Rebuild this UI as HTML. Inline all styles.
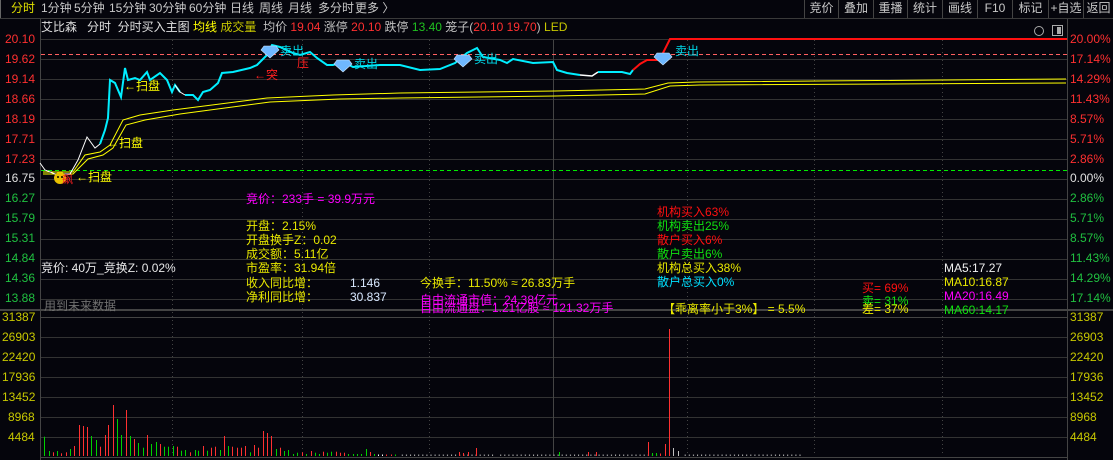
<!DOCTYPE html>
<html><head><meta charset="utf-8">
<style>
*{margin:0;padding:0;box-sizing:border-box}
body{width:1113px;height:460px;background:#05050c;overflow:hidden;position:relative;font-family:"Liberation Sans","Noto Sans CJK SC",sans-serif;font-size:12px;color:#c8c8c8}
.t{position:absolute;white-space:nowrap;line-height:14px}
.tb{position:absolute;top:0;height:18px;line-height:17px;font-size:12px;color:#c8c8c8}
.btn{position:absolute;top:0;height:18px;border-left:1px solid #444;text-align:center;line-height:17px;color:#c8c8c8}
.ax{position:absolute;font-size:12px;line-height:14px;white-space:nowrap}
</style></head><body>
<div style="position:absolute;left:0;top:18px;width:1113px;height:1px;background:#3a3a3a"></div>
<div style="position:absolute;left:0;top:0;width:1px;height:18px;background:#666"></div>
<div class="tb" style="left:11px;color:#e0e000">分时</div>
<div class="tb" style="left:41px">1分钟</div>
<div class="tb" style="left:74px">5分钟</div>
<div class="tb" style="left:109px">15分钟</div>
<div class="tb" style="left:149px">30分钟</div>
<div class="tb" style="left:189px">60分钟</div>
<div class="tb" style="left:230px">日线</div>
<div class="tb" style="left:259px">周线</div>
<div class="tb" style="left:288px">月线</div>
<div class="tb" style="left:318px">多分时</div>
<div class="tb" style="left:355px">更多 〉</div>
<div class="btn" style="left:804px;width:34px">竞价</div>
<div class="btn" style="left:838px;width:35px">叠加</div>
<div class="btn" style="left:873px;width:34px">重播</div>
<div class="btn" style="left:907px;width:35px">统计</div>
<div class="btn" style="left:942px;width:35px">画线</div>
<div class="btn" style="left:977px;width:35px">F10</div>
<div class="btn" style="left:1012px;width:36px">标记</div>
<div class="btn" style="left:1048px;width:35px">+自选</div>
<div class="btn" style="left:1083px;width:30px">返回</div>

<div class="t" style="left:41px;top:20px;color:#e0e0e0">艾比森 &nbsp; 分时 &nbsp;分时买入主图 <span style="color:#ffff00">均线</span> <span style="color:#c8c800">成交量</span> &nbsp;<span style="color:#c0c0c0">均价</span> <span style="color:#ff3030">19.04</span> <span style="color:#c0c0c0">涨停</span> <span style="color:#ff3030">20.10</span> <span style="color:#c0c0c0">跌停</span> <span style="color:#20c020">13.40</span> <span style="color:#c0c0c0">笼子(</span><span style="color:#ff3030">20.10 19.70</span><span style="color:#c0c0c0">)</span> <span style="color:#c8c800">LED</span></div>
<div style="position:absolute;left:1034px;top:26px;width:10px;height:10px;border:1px solid #aaa;border-radius:50%"></div>
<div style="position:absolute;left:1052px;top:25px;width:11px;height:11px;border:1px solid #aaa"><div style="position:absolute;right:1px;top:1px;width:4px;height:7px;background:#aaa"></div></div>

<svg style="position:absolute;left:0;top:0" width="1113" height="460">
<defs>
<pattern id="tiny" x="0" y="0" width="4.1" height="3" patternUnits="userSpaceOnUse"><rect x="0" y="0" width="1" height="3" fill="#b0b0b0"/></pattern>
</defs>
<g stroke="#333" stroke-width="1">
<line x1="40" y1="39.5" x2="1067" y2="39.5"/><line x1="40" y1="59.5" x2="1067" y2="59.5"/><line x1="40" y1="79.5" x2="1067" y2="79.5"/><line x1="40" y1="99.5" x2="1067" y2="99.5"/><line x1="40" y1="119.5" x2="1067" y2="119.5"/><line x1="40" y1="139.5" x2="1067" y2="139.5"/><line x1="40" y1="159.5" x2="1067" y2="159.5"/><line x1="40" y1="179.5" x2="1067" y2="179.5"/><line x1="40" y1="199.5" x2="1067" y2="199.5"/><line x1="40" y1="219.5" x2="1067" y2="219.5"/><line x1="40" y1="239.5" x2="1067" y2="239.5"/><line x1="40" y1="259.5" x2="1067" y2="259.5"/><line x1="40" y1="279.5" x2="1067" y2="279.5"/><line x1="40" y1="299.5" x2="1067" y2="299.5"/>
<line x1="40" y1="337.5" x2="1067" y2="337.5"/><line x1="40" y1="357.5" x2="1067" y2="357.5"/><line x1="40" y1="377.5" x2="1067" y2="377.5"/><line x1="40" y1="397.5" x2="1067" y2="397.5"/><line x1="40" y1="417.5" x2="1067" y2="417.5"/><line x1="40" y1="437.5" x2="1067" y2="437.5"/>
</g>
<rect x="0" y="309" width="1113" height="2" fill="#444"/>
<line x1="40" y1="317.5" x2="1067" y2="317.5" stroke="#444"/>
<line x1="40" y1="457.5" x2="1067" y2="457.5" stroke="#444"/>
<line x1="40.5" y1="19" x2="40.5" y2="460" stroke="#444"/>
<line x1="1067.5" y1="19" x2="1067.5" y2="460" stroke="#444"/>
<g stroke="#444" stroke-dasharray="1,3">
<line x1="172.5" y1="40" x2="172.5" y2="456"/><line x1="302.5" y1="40" x2="302.5" y2="456"/><line x1="429.5" y1="40" x2="429.5" y2="456"/><line x1="687.5" y1="40" x2="687.5" y2="456"/><line x1="814.5" y1="40" x2="814.5" y2="456"/><line x1="942.5" y1="40" x2="942.5" y2="456"/>
</g>
<line x1="553.5" y1="40" x2="553.5" y2="456" stroke="#444"/>
<line x1="41" y1="54.5" x2="1067" y2="54.5" stroke="#ff6060" stroke-dasharray="4,3"/>
<line x1="41" y1="170.5" x2="1067" y2="170.5" stroke="#00ee00" stroke-dasharray="4,3"/>

<!-- avg lines -->
<polyline fill="none" stroke="#ffff00" stroke-width="1" points="43,172 73,172 85,155 100,152 110,145 123,120 140,115 173,110 267,98 333,95 400,93 555,91 645,89 668,83 697,82 1066,79"/>
<polyline fill="none" stroke="#ffff00" stroke-width="1" points="43,174 73,174 88,159 103,155 113,148 126,125 145,120 180,114 270,102 340,99 400,98 555,96 645,94 670,86 700,85 1066,83"/>
<!-- price -->
<polyline fill="none" stroke="#ffffff" stroke-width="1" points="40,163 45,170 55,174 70,174 78,160 87,137 95,148 100,144"/>
<polyline fill="none" stroke="#00eeff" stroke-width="2" points="100,144 105,130 108,118 110,80 115,83 121,97 125,68 128,80 135,78 140,80 147,72 150,80 160,73 167,80 172,92 175,85 180,92"/>
<polyline fill="none" stroke="#ffffff" stroke-width="1" points="175,85 180,92 185,95"/>
<polyline fill="none" stroke="#00eeff" stroke-width="2" points="185,95 193,95 198,100 203,92 210,90 218,83 222,73 233,72 250,68 257,65 267,55 272,45 280,47 293,53 300,55 310,52 317,58 327,65 333,65 343,62 353,67 380,65 400,65 420,70 440,69 455,63 467,53 477,48 483,57 500,60 507,63 513,59 533,63 553,62 557,70 567,73 580,75"/>
<polyline fill="none" stroke="#ffffff" stroke-width="1.5" points="580,75 592,76 598,72"/>
<polyline fill="none" stroke="#00eeff" stroke-width="2" points="598,72 622,72 630,74 633,70"/>
<polyline fill="none" stroke="#ff1010" stroke-width="2" points="633,70 640,64 647,60 657,60 662,55 670,39 1067,39"/>
<!-- diamonds -->
<g fill="#6fb8ff" stroke="#cfe8ff" stroke-width="0.6">
<path d="M264,46 L276,46 L279,50 L270,58 L261,50Z"/>
<path d="M337,60 L349,60 L352,64 L343,72 L334,64Z"/>
<path d="M457,55 L469,55 L472,59 L463,67 L454,59Z"/>
<path d="M657,53 L669,53 L672,57 L663,65 L654,57Z"/>
</g>
<!-- smiley -->
<circle cx="60" cy="178" r="6" fill="#e8c000"/>
<circle cx="58" cy="177" r="1" fill="#000"/><circle cx="62" cy="177" r="1" fill="#000"/>

<!-- volume bars -->
<g>
<rect x="44" y="436.7" width="1" height="19.3" fill="#00d000"/>
<rect x="49" y="451" width="1" height="5" fill="#00d000"/>
<rect x="53" y="452.3" width="1" height="3.7" fill="#ff3030"/>
<rect x="57" y="451" width="1" height="5" fill="#00d000"/>
<rect x="61" y="453.3" width="1" height="2.7" fill="#ff3030"/>
<rect x="66" y="452.3" width="1" height="3.7" fill="#ff3030"/>
<rect x="70" y="449" width="1" height="7" fill="#00d000"/>
<rect x="74" y="446" width="1" height="10" fill="#ff3030"/>
<rect x="79" y="425" width="1" height="31" fill="#ff3030"/>
<rect x="83" y="426" width="1" height="30" fill="#ff3030"/>
<rect x="87" y="427" width="1" height="29" fill="#ff3030"/>
<rect x="91" y="436" width="1" height="20" fill="#00d000"/>
<rect x="96" y="440" width="1" height="16" fill="#00d000"/>
<rect x="100" y="446.7" width="1" height="9.3" fill="#ff3030"/>
<rect x="105" y="435" width="1" height="21" fill="#ff3030"/>
<rect x="108" y="425" width="1" height="31" fill="#ff3030"/>
<rect x="113" y="405" width="1" height="51" fill="#ff3030"/>
<rect x="117" y="419" width="1" height="37" fill="#00d000"/>
<rect x="121" y="435" width="1" height="21" fill="#00d000"/>
<rect x="126" y="410" width="1" height="46" fill="#ff3030"/>
<rect x="130" y="436" width="1" height="20" fill="#00d000"/>
<rect x="134" y="439" width="1" height="17" fill="#ff3030"/>
<rect x="138" y="443" width="1" height="13" fill="#00d000"/>
<rect x="143" y="447.7" width="1" height="8.3" fill="#00d000"/>
<rect x="147" y="435" width="1" height="21" fill="#ff3030"/>
<rect x="151" y="444" width="1" height="12" fill="#00d000"/>
<rect x="156" y="442" width="1" height="14" fill="#00d000"/>
<rect x="160" y="444" width="1" height="12" fill="#ff3030"/>
<rect x="164" y="446.7" width="1" height="9.3" fill="#00d000"/>
<rect x="168" y="446.7" width="1" height="9.3" fill="#00d000"/>
<rect x="173" y="446" width="1" height="10" fill="#00d000"/>
<rect x="177" y="446.7" width="1" height="9.3" fill="#ff3030"/>
<rect x="181" y="450.7" width="1" height="5.3" fill="#00d000"/>
<rect x="185" y="450" width="1" height="6" fill="#00d000"/>
<rect x="190" y="452.3" width="1" height="3.7" fill="#ff3030"/>
<rect x="195" y="450" width="1" height="6" fill="#00d000"/>
<rect x="198" y="450.7" width="1" height="5.3" fill="#00d000"/>
<rect x="203" y="446" width="1" height="10" fill="#ff3030"/>
<rect x="207" y="450.7" width="1" height="5.3" fill="#00d000"/>
<rect x="211" y="447.7" width="1" height="8.3" fill="#ff3030"/>
<rect x="215" y="446.7" width="1" height="9.3" fill="#ff3030"/>
<rect x="220" y="450" width="1" height="6" fill="#00d000"/>
<rect x="224" y="436" width="1" height="20" fill="#ff3030"/>
<rect x="228" y="446" width="1" height="10" fill="#00d000"/>
<rect x="232" y="446.7" width="1" height="9.3" fill="#ff3030"/>
<rect x="237" y="447.7" width="1" height="8.3" fill="#ff3030"/>
<rect x="241" y="447.7" width="1" height="8.3" fill="#ff3030"/>
<rect x="245" y="446" width="1" height="10" fill="#ff3030"/>
<rect x="250" y="452.3" width="1" height="3.7" fill="#00d000"/>
<rect x="254" y="445" width="1" height="11" fill="#ff3030"/>
<rect x="258" y="447.7" width="1" height="8.3" fill="#ff3030"/>
<rect x="263" y="431" width="1" height="25" fill="#ff3030"/>
<rect x="267" y="433" width="1" height="23" fill="#ff3030"/>
<rect x="271" y="436" width="1" height="20" fill="#ff3030"/>
<rect x="276" y="449" width="1" height="7" fill="#00d000"/>
<rect x="280" y="447.7" width="1" height="8.3" fill="#ff3030"/>
<rect x="284" y="451" width="1" height="5" fill="#00d000"/>
<rect x="288" y="450" width="1" height="6" fill="#00d000"/>
<rect x="293" y="454" width="1" height="2" fill="#00d000"/>
<rect x="297" y="452.7" width="1" height="3.3" fill="#00d000"/>
<rect x="302" y="452.3" width="1" height="3.7" fill="#ff3030"/>
<rect x="306" y="454" width="1" height="2" fill="#00d000"/>
<rect x="311" y="451" width="1" height="5" fill="#ff3030"/>
<rect x="315" y="452.7" width="1" height="3.3" fill="#00d000"/>
<rect x="319" y="454" width="1" height="2" fill="#00d000"/>
<rect x="323" y="451.7" width="1" height="4.3" fill="#ff3030"/>
<rect x="327" y="452.7" width="1" height="3.3" fill="#00d000"/>
<rect x="331" y="451.7" width="1" height="4.3" fill="#00d000"/>
<rect x="336" y="451.7" width="1" height="4.3" fill="#ff3030"/>
<rect x="340" y="452.7" width="1" height="3.3" fill="#ff3030"/>
<rect x="344" y="452.7" width="1" height="3.3" fill="#ff3030"/>
<rect x="348" y="454" width="1" height="2" fill="#00d000"/>
<rect x="353" y="454" width="1" height="2" fill="#00d000"/>
<rect x="357" y="454" width="1" height="2" fill="#00d000"/>
<rect x="361" y="454" width="1" height="2" fill="#00d000"/>
<rect x="366" y="449" width="1" height="7" fill="#00d000"/>
<rect x="370" y="452" width="1" height="4" fill="#ff3030"/>
<rect x="374" y="454" width="1" height="2" fill="#00d000"/>
<rect x="378" y="454.5" width="1" height="1.5" fill="#ffffff"/>
<rect x="382" y="454.5" width="1" height="1.5" fill="#ffffff"/>
<rect x="386" y="454.5" width="1" height="1.5" fill="#ff3030"/>
<rect x="391" y="454.5" width="1" height="1.5" fill="#ff3030"/>
<rect x="395" y="454.5" width="1" height="1.5" fill="#00d000"/>
<rect x="399" y="454.5" width="97" height="1.5" fill="url(#tiny)"/>
<rect x="459" y="452" width="1" height="4" fill="#ff3030"/>
<rect x="463" y="453" width="1" height="3" fill="#ff3030"/>
<rect x="468" y="452" width="1" height="4" fill="#ff3030"/>
<rect x="476" y="448" width="1" height="8" fill="#ff3030"/>
<rect x="500" y="454.5" width="160" height="1.5" fill="url(#tiny)"/>
<rect x="559" y="452" width="1" height="4" fill="#00d000"/>
<rect x="588" y="452" width="1" height="4" fill="#ff3030"/>
<rect x="596" y="452" width="1" height="4" fill="#ff3030"/>
<rect x="648" y="442" width="1" height="14" fill="#ff3030"/>
<rect x="652" y="453" width="1" height="3" fill="#00d000"/>
<rect x="656" y="453" width="1" height="3" fill="#00d000"/>
<rect x="660" y="453.5" width="1" height="2.5" fill="#ff3030"/>
<rect x="665" y="444" width="1" height="12" fill="#ff3030"/>
<rect x="669" y="329" width="1" height="127" fill="#ff3030"/>
<rect x="673" y="448" width="1" height="8" fill="#c0c0c0"/>
<rect x="678" y="451" width="1" height="5" fill="#c0c0c0"/>
<rect x="682" y="454.5" width="120" height="1.5" fill="url(#tiny)"/>
</g>
</svg>

<!-- chart labels -->
<div class="t" style="left:124px;top:79px;color:#ffff00">←扫盘</div>
<div class="t" style="left:107px;top:136px;color:#ffff00">←扫盘</div>
<div class="t" style="left:76px;top:170px;color:#ffff00">←扫盘</div>
<div class="t" style="left:62px;top:173px;color:#ff2020;font-size:11px">飙</div>
<div class="t" style="left:254px;top:68px;color:#ff2020">←突</div>
<div class="t" style="left:297px;top:56px;color:#ff2020">压</div>
<div class="t" style="left:280px;top:44px;color:#00d8e8">卖出</div>
<div class="t" style="left:354px;top:57px;color:#00d8e8">卖出</div>
<div class="t" style="left:474px;top:52px;color:#00d8e8">卖出</div>
<div class="t" style="left:675px;top:44px;color:#00d8e8">卖出</div>

<!-- info text -->
<div class="t" style="left:246px;top:192px;color:#ff00ff">竞价：233手 = 39.9万元</div>
<div class="t" style="left:246px;top:219px;color:#e8e800">开盘：2.15%</div>
<div class="t" style="left:246px;top:233px;color:#e8e800">开盘换手Z：0.02</div>
<div class="t" style="left:246px;top:247px;color:#e8e800">成交额：5.11亿</div>
<div class="t" style="left:246px;top:261px;color:#e8e800">市盈率：31.94倍</div>
<div class="t" style="left:246px;top:276px;color:#e8e800">收入同比增：</div>
<div class="t" style="left:350px;top:276px;color:#d8e8ff">1.146</div>
<div class="t" style="left:246px;top:290px;color:#e8e800">净利同比增：</div>
<div class="t" style="left:350px;top:290px;color:#d8e8ff">30.837</div>
<div class="t" style="left:41px;top:261px;color:#e8e8e8">竞价: 40万_竞换Z: 0.02%</div>
<div class="t" style="left:44px;top:299px;color:#707070">用到未来数据</div>
<div class="t" style="left:420px;top:276px;color:#e8e800">今换手：11.50% ≈ 26.83万手</div>
<div class="t" style="left:420px;top:293px;color:#ff00ff">自由流通市值：24.38亿元</div>
<div class="t" style="left:420px;top:301px;color:#ff00ff">自由流通盘：1.21亿股 ≈ 121.32万手</div>
<div class="t" style="left:657px;top:205px;color:#ff1010">机构买入63%</div>
<div class="t" style="left:657px;top:219px;color:#10e010">机构卖出25%</div>
<div class="t" style="left:657px;top:233px;color:#ff1010">散户买入6%</div>
<div class="t" style="left:657px;top:247px;color:#10e010">散户卖出6%</div>
<div class="t" style="left:657px;top:261px;color:#e8e800">机构总买入38%</div>
<div class="t" style="left:657px;top:275px;color:#00e0ff">散户总买入0%</div>
<div class="t" style="left:663px;top:302px;color:#e8e800">【乖离率小于3%】 = 5.5%</div>
<div class="t" style="left:862px;top:281px;color:#ff1010">买= 69%</div>
<div class="t" style="left:862px;top:294px;color:#10e010">卖= 31%</div>
<div class="t" style="left:862px;top:302px;color:#e8e800">差= 37%</div>
<div class="t" style="left:944px;top:261px;color:#f0f0f0">MA5:17.27</div>
<div class="t" style="left:944px;top:275px;color:#e8e800">MA10:16.87</div>
<div class="t" style="left:944px;top:289px;color:#ff00ff">MA20:16.49</div>
<div class="t" style="left:944px;top:303px;color:#10e010">MA60:14.17</div>

<!-- left axis -->
<div class="ax" style="left:5px;top:32px;color:#ff3030">20.10</div>
<div class="ax" style="left:5px;top:52px;color:#ff3030">19.62</div>
<div class="ax" style="left:5px;top:72px;color:#ff3030">19.14</div>
<div class="ax" style="left:5px;top:92px;color:#ff3030">18.66</div>
<div class="ax" style="left:5px;top:112px;color:#ff3030">18.19</div>
<div class="ax" style="left:5px;top:132px;color:#ff3030">17.71</div>
<div class="ax" style="left:5px;top:152px;color:#ff3030">17.23</div>
<div class="ax" style="left:5px;top:171px;color:#e0e0e0">16.75</div>
<div class="ax" style="left:5px;top:191px;color:#20c040">16.27</div>
<div class="ax" style="left:5px;top:211px;color:#20c040">15.79</div>
<div class="ax" style="left:5px;top:231px;color:#20c040">15.31</div>
<div class="ax" style="left:5px;top:251px;color:#20c040">14.84</div>
<div class="ax" style="left:5px;top:271px;color:#20c040">14.36</div>
<div class="ax" style="left:5px;top:291px;color:#20c040">13.88</div>
<div class="ax" style="left:2px;top:310px;color:#c8c800">31387</div>
<div class="ax" style="left:2px;top:330px;color:#c8c800">26903</div>
<div class="ax" style="left:2px;top:350px;color:#c8c800">22420</div>
<div class="ax" style="left:2px;top:370px;color:#c8c800">17936</div>
<div class="ax" style="left:2px;top:390px;color:#c8c800">13452</div>
<div class="ax" style="left:8px;top:410px;color:#c8c800">8968</div>
<div class="ax" style="left:8px;top:430px;color:#c8c800">4484</div>
<!-- right axis -->
<div class="ax" style="left:1070px;top:32px;color:#ff3030">20.00%</div>
<div class="ax" style="left:1070px;top:52px;color:#ff3030">17.14%</div>
<div class="ax" style="left:1070px;top:72px;color:#ff3030">14.29%</div>
<div class="ax" style="left:1070px;top:92px;color:#ff3030">11.43%</div>
<div class="ax" style="left:1070px;top:112px;color:#ff3030">8.57%</div>
<div class="ax" style="left:1070px;top:132px;color:#ff3030">5.71%</div>
<div class="ax" style="left:1070px;top:152px;color:#ff3030">2.86%</div>
<div class="ax" style="left:1070px;top:171px;color:#e0e0e0">0.00%</div>
<div class="ax" style="left:1070px;top:191px;color:#20c040">2.86%</div>
<div class="ax" style="left:1070px;top:211px;color:#20c040">5.71%</div>
<div class="ax" style="left:1070px;top:231px;color:#20c040">8.57%</div>
<div class="ax" style="left:1070px;top:251px;color:#20c040">11.43%</div>
<div class="ax" style="left:1070px;top:271px;color:#20c040">14.29%</div>
<div class="ax" style="left:1070px;top:291px;color:#20c040">17.14%</div>
<div class="ax" style="left:1070px;top:310px;color:#c8c800">31387</div>
<div class="ax" style="left:1070px;top:330px;color:#c8c800">26903</div>
<div class="ax" style="left:1070px;top:350px;color:#c8c800">22420</div>
<div class="ax" style="left:1070px;top:370px;color:#c8c800">17936</div>
<div class="ax" style="left:1070px;top:390px;color:#c8c800">13452</div>
<div class="ax" style="left:1070px;top:410px;color:#c8c800">8968</div>
<div class="ax" style="left:1070px;top:430px;color:#c8c800">4484</div>
</body></html>
